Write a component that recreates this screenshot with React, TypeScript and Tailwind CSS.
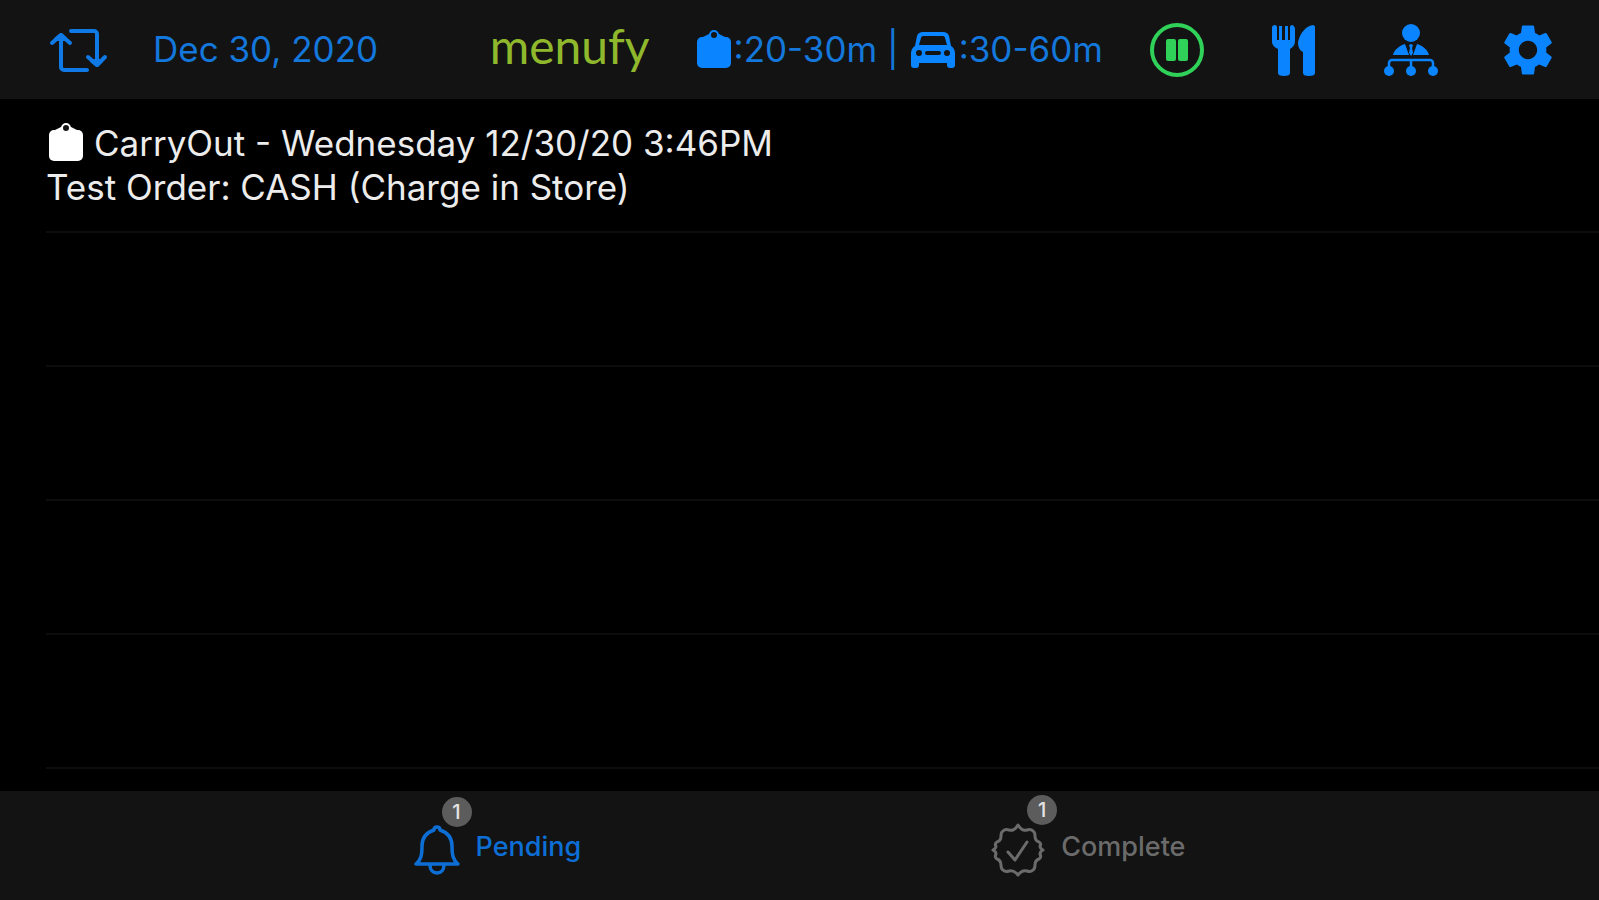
import type { ReactNode } from "react";
import clsx from "clsx";
import { MdSettings } from "react-icons/md";

interface Order { id: number; title: string; detail: string; }

const orders: Order[] = [
  { id: 1, title: "CarryOut - Wednesday 12/30/20 3:46PM", detail: "Test Order: CASH (Charge in Store)" },
];
const ROWS = 5;

function RefreshIcon() {
  return (
    <svg className="h-12 w-[60px]" viewBox="0 0 60 48" fill="none" stroke="currentColor" strokeWidth="4" strokeLinecap="round" strokeLinejoin="round" aria-hidden="true">
      <path d="M23 5h23a3 3 0 0 1 3 3v30M40 31l9 8 8-8" />
      <path d="M39 44H16a3 3 0 0 1-3-3V10M4 17l9-8 9 8" />
      <path d="m44 35 5 4 4-4ZM8 13l5-4 4 4Z" fill="currentColor" />
    </svg>
  );
}

function BagIcon({ className }: { className?: string }) {
  return (
    <svg className={clsx("h-10 w-9", className)} viewBox="0 0 36 40" fill="currentColor" aria-hidden="true">
      <rect x="1" y="7" width="34" height="31" rx="5" />
      <path d="M5 8 13 4h10l8 4Z" />
      <circle cx="18" cy="5" r="4" className="fill-[#141414]" stroke="currentColor" strokeWidth="2" />
    </svg>
  );
}

function CarIcon() {
  return (
    <svg className="h-[38px] w-11" viewBox="1 0 44 38" aria-hidden="true">
      <path
        fill="currentColor"
        fillRule="evenodd"
        d="M13 1h20c3 0 5 1 6 4l2 10c2 1 4 4 4 7v12c0 2-1 3-3 3h-2c-2 0-3-1-3-3v-2H9v2c0 2-1 3-3 3H4c-2 0-3-1-3-3V22c0-3 2-6 4-7L7 5c1-3 3-4 6-4Zm0 4c-1 0-2 1-2 2L9 14h28l-2-7c0-1-1-2-2-2H13ZM9 19a3 3 0 1 0 0 6 3 3 0 0 0 0-6Zm28 0a3 3 0 1 0 0 6 3 3 0 0 0 0-6Zm-20 1a2 2 0 0 0 0 4h12a2 2 0 0 0 0-4H17Z"
      />
    </svg>
  );
}

function PauseIcon() {
  return (
    <svg className="size-14" viewBox="0 0 56 56" aria-hidden="true">
      <circle cx="28" cy="28" r="25" fill="none" stroke="currentColor" strokeWidth="4" />
      <rect x="17" y="17" width="10" height="22" rx="2" fill="currentColor" />
      <rect x="29" y="17" width="10" height="22" rx="2" fill="currentColor" />
    </svg>
  );
}

function UtensilsIcon() {
  return (
    <svg className="size-14" viewBox="-1 0 56 56" fill="currentColor" aria-hidden="true">
      <path d="M8 3c1 0 2 1 2 2v13h2V4h3v14h3V4h3v14h2V5c0-1 1-2 2-2s2 1 3 3v13c0 4-2 6-5 8v24c0 2-2 3-6 3s-6-1-6-3V27c-4-2-6-4-6-8V6c0-2 1-3 3-3Z" />
      <path d="M46 3c1 0 2 1 2 2v46c0 2-2 3-6 3s-6-1-6-3V30c-4-2-5-6-5-10C33 12 38 4 46 3Z" />
    </svg>
  );
}

function StaffIcon() {
  return (
    <svg className="size-14" viewBox="0 0 56 56" fill="currentColor" aria-hidden="true">
      <circle cx="28" cy="11" r="9" />
      <path d="M22 22 26 33H10c1-5 6-9 12-11ZM34 22l-4 11h16c-1-5-6-9-12-11Z" />
      <path d="m26 23 2-1 2 1-1 3 1 5-2 3-2-3 1-5Z" />
      <path d="M6 47v-6a3 3 0 0 1 3-3h38a3 3 0 0 1 3 3v6M28 38v9" fill="none" stroke="currentColor" strokeWidth="2.5" />
      <circle cx="6" cy="49" r="5" />
      <circle cx="28" cy="49" r="5" />
      <circle cx="50" cy="49" r="5" />
    </svg>
  );
}

function BellIcon() {
  return (
    <svg className="h-[50px] w-[46px]" viewBox="0 0 46 50" fill="none" stroke="currentColor" strokeWidth="3.5" strokeLinejoin="round" aria-hidden="true">
      <path d="M23 2c-2 0-3 1-3 3C11 8 8 14 8 21c0 9-1 14-6 18h42c-5-4-6-9-6-18 0-7-3-13-12-16 0-2-1-3-3-3Z" />
      <path d="M16 40c0 5 3 8 7 8s7-3 7-8" />
    </svg>
  );
}

function SealIcon() {
  return (
    <svg className="size-[54px]" viewBox="0 0 54 54" fill="none" stroke="currentColor" strokeWidth="3" strokeLinecap="round" strokeLinejoin="round" aria-hidden="true">
      <path d="M27 2c3 5 6 6 9 5 3-1 5 0 6 1 2 1 2 3 2 5 0 3 1 5 4 6 2 1 2 3 1 4 0 2 1 3 3 4-2 1-3 2-3 4 1 2 1 4-1 5-3 1-4 3-4 6 0 2 0 4-2 5-1 1-3 2-6 1-3-1-6 0-9 4-3-4-6-5-9-4-3 1-5 0-6-1-2-1-2-3-2-5 0-3-1-5-4-6-2-1-2-3-1-5 0-2-1-3-3-4 2-1 3-2 3-4-1-1-1-3 1-4 3-1 4-3 4-6 0-2 0-4 2-5 1-1 3-2 6-1 3 1 6 0 9-5Z" />
      <path d="m17 29 7 8 12-18" />
    </svg>
  );
}

function Tab({ label, count, icon, active }: { label: string; count: number; icon: ReactNode; active?: boolean }) {
  return (
    <button
      type="button"
      aria-current={active ? "page" : undefined}
      className={clsx("flex items-center gap-4 text-[27px] font-medium", active ? "text-[#0d6fd6]" : "text-[#6b6b6b]")}
    >
      <span className="relative pt-1">
        {icon}
        <span className="absolute -top-6 -right-3 flex size-[30px] items-center justify-center rounded-full bg-[#5c5c5c] text-xl text-[#e4e4e4]">
          {count}
        </span>
      </span>
      {label}
    </button>
  );
}

export default function App() {
  return (
    <div className="flex min-h-screen flex-col bg-black font-['Inter',sans-serif] text-[#ececec]">
      <header className="flex h-[99px] items-center justify-between bg-[#131313] pr-[43px] pl-12 whitespace-nowrap text-[#0a84ff]">
        <div className="flex items-center gap-[45px]">
          <button type="button" aria-label="Refresh" className="text-[#0f7ae6]"><RefreshIcon /></button>
          <button type="button" className="text-[35px] text-[#1377db]">Dec 30, 2020</button>
        </div>
        <div className="flex items-center">
          <h1 className="mr-[46px] pb-2 font-['Lato',sans-serif] text-[48px] leading-none text-[#8fb82c]">menufy</h1>
          <button type="button" className="mr-[46px] flex items-center text-[35px] text-[#1377db]">
            <BagIcon className="mr-0.5 text-[#0a84ff]" />
            <span className="mr-3">:20-30m |</span>
            <span className="mr-1 text-[#0a84ff]"><CarIcon /></span>
            <span>:30-60m</span>
          </button>
          <div className="flex items-center gap-[61px]">
            <button type="button" aria-label="Pause orders" className="text-[#30d158]"><PauseIcon /></button>
            <button type="button" aria-label="Menu"><UtensilsIcon /></button>
            <button type="button" aria-label="Staff"><StaffIcon /></button>
            <button type="button" aria-label="Settings"><MdSettings className="size-14" viewBox="1 1 22 22" /></button>
          </div>
        </div>
      </header>

      <main className="flex-1">
        <ul>
          {Array.from({ length: ROWS }, (_, i) => {
            const order = orders[i];
            return (
              <li key={i} className="ml-[46px] h-[134px] border-b-2 border-[#0d0d0d]">
                {order && (
                  <button type="button" className="w-full pt-[22px] text-left text-[35px] leading-[44px]">
                    <span className="flex items-center gap-[10px] pl-0.5">
                      <BagIcon className="text-white" />
                      {order.title}
                    </span>
                    <span className="block">{order.detail}</span>
                  </button>
                )}
              </li>
            );
          })}
        </ul>
      </main>

      <nav className="flex h-[109px] items-center justify-center gap-[410px] bg-[#121312] pt-1">
        <Tab label="Pending" count={1} icon={<BellIcon />} active />
        <Tab label="Complete" count={1} icon={<SealIcon />} />
      </nav>
    </div>
  );
}
